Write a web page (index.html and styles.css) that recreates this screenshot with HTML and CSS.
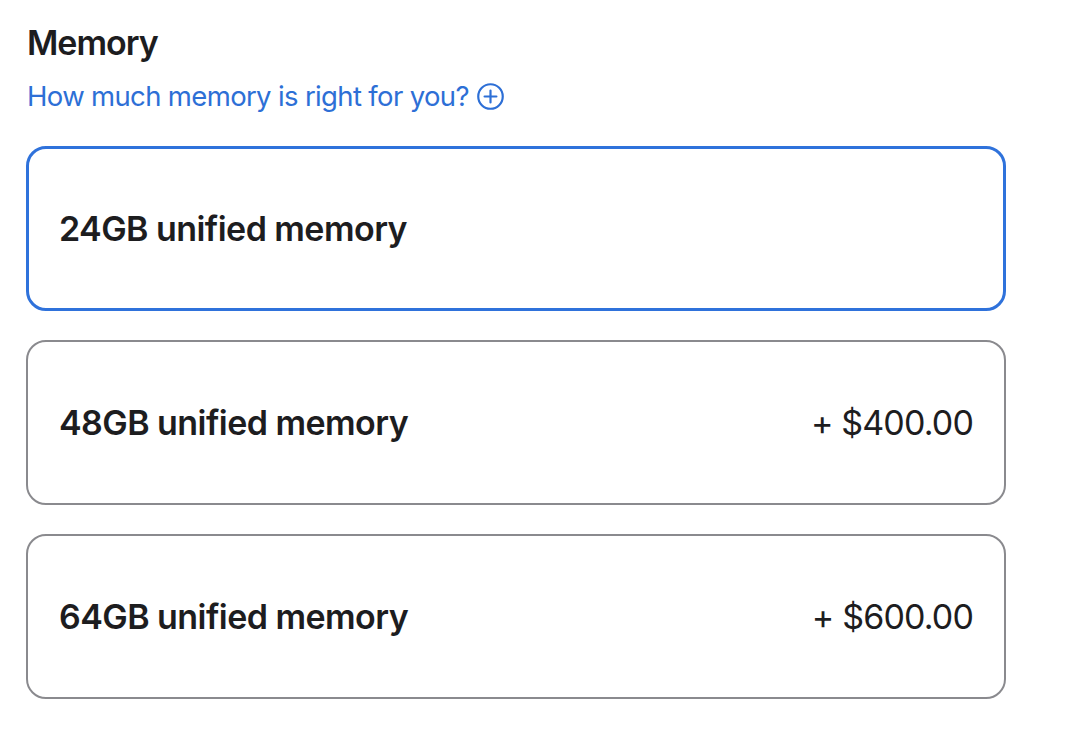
FILE: index.html
```html
<!DOCTYPE html>
<html>
<head>
<meta charset="utf-8">
<title>Memory</title>
<link rel="stylesheet" href="styles.css">
</head>
<body>
	<div class="memory">
		<h2 class="memory-title">Memory</h2>
		<a class="memory-help" href="#">How much memory is right for you?
			<svg class="plus-icon" width="27" height="27" viewBox="0 0 26 26">
				<circle cx="13" cy="13" r="11.8" fill="none" stroke="currentColor" stroke-width="2.1"/>
				<path d="M13 7.3v11.4M7.3 13h11.4" stroke="currentColor" stroke-width="2.1" stroke-linecap="round"/>
			</svg>
		</a>
		<div class="options">
			<div class="option selected">
				<span class="option-name">24GB unified memory</span>
			</div>
			<div class="option">
				<span class="option-name">48GB unified memory</span>
				<span class="option-price">+ $400.00</span>
			</div>
			<div class="option">
				<span class="option-name">64GB unified memory</span>
				<span class="option-price">+ $600.00</span>
			</div>
		</div>
	</div>
</body>
</html>
```

FILE: styles.css
```css
*{margin:0;padding:0;box-sizing:border-box;}
body{background:#fff;color:#1d1d1f;font-family:Inter,"Liberation Sans",sans-serif;}

.memory{width:1006px;padding:23px 0 0 26px;}
.memory-title{
	font-size:34px;
	line-height:40px;
	font-weight:600;
	letter-spacing:-1px;
	padding-left:1px;
}
.memory-help{
	display:inline-flex;
	align-items:center;
	gap:8px;
	margin:16px 0 0 1px;
	font-size:27.5px;
	line-height:34px;
	color:#2d6fd6;
	text-decoration:none;
	letter-spacing:-0.65px;
}
.plus-icon{flex:none;}

.options{display:flex;flex-direction:column;gap:29px;margin-top:33px;}
.option{
	display:flex;
	align-items:center;
	justify-content:space-between;
	height:165px;
	padding:0 31px 0 31px;
	border:2px solid #8a8a8e;
	border-radius:20px;
}
.option.selected{border:3px solid #2f72db;padding-left:30px;}
.option-name{font-size:34px;font-weight:600;letter-spacing:-0.55px;}
.option-price{font-size:34px;font-weight:400;letter-spacing:-0.85px;}
```
